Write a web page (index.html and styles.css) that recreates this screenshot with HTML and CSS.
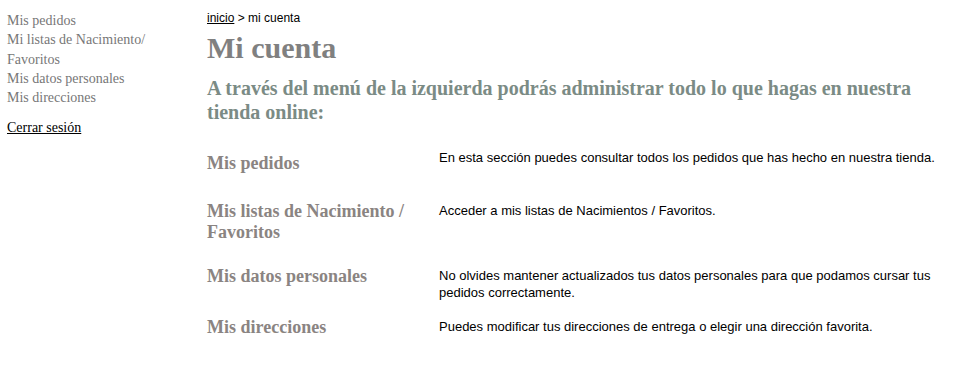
FILE: index.html
```html
<!DOCTYPE html>
<html lang="es">
<head>
<meta charset="utf-8">
<title>Mi cuenta</title>
<link rel="stylesheet" href="styles.css">
</head>
<body>
<div class="page">
  <nav class="side">
    <ul class="side-menu">
      <li><a href="#">Mis pedidos</a></li>
      <li><a href="#">Mi listas de Nacimiento/ Favoritos</a></li>
      <li><a href="#">Mis datos personales</a></li>
      <li><a href="#">Mis direcciones</a></li>
    </ul>
    <a class="logout" href="#">Cerrar sesión</a>
  </nav>
  <main class="main">
    <div class="crumbs"><a href="#">inicio</a> &gt; mi cuenta</div>
    <h1 class="title">Mi cuenta</h1>
    <h2 class="intro">A través del menú de la izquierda podrás administrar todo lo que hagas en nuestra tienda online:</h2>
    <div class="rows">
      <div class="row r1">
        <h3 class="row-title">Mis pedidos</h3>
        <p class="row-desc">En esta sección puedes consultar todos los pedidos que has hecho en nuestra tienda.</p>
      </div>
      <div class="row r2">
        <h3 class="row-title">Mis listas de Nacimiento / Favoritos</h3>
        <p class="row-desc">Acceder a mis listas de Nacimientos / Favoritos.</p>
      </div>
      <div class="row r3">
        <h3 class="row-title">Mis datos personales</h3>
        <p class="row-desc">No olvides mantener actualizados tus datos personales para que podamos cursar tus pedidos correctamente.</p>
      </div>
      <div class="row r4">
        <h3 class="row-title">Mis direcciones</h3>
        <p class="row-desc">Puedes modificar tus direcciones de entrega o elegir una dirección favorita.</p>
      </div>
    </div>
  </main>
</div>
</body>
</html>
```
FILE: styles.css
```css
html, body {
  margin: 0;
  padding: 0;
  background: #fff;
}
body {
  font-family: "Liberation Serif", "Times New Roman", serif;
}
.page {
  display: flex;
  padding: 0 0 0 7px;
}
.side {
  width: 200px;
  flex: none;
  padding-top: 11px;
}
.side-menu {
  list-style: none;
  margin: 0;
  padding: 0;
  width: 160px;
}
.side-menu li {
  font-size: 14px;
  line-height: 19.3px;
}
.side-menu a {
  color: #777;
  text-decoration: none;
}
.logout {
  display: inline-block;
  margin-top: 11px;
  font-size: 14px;
  line-height: 19px;
  color: #000;
  text-decoration: underline;
}
.main {
  flex: 1;
  padding-top: 11px;
  padding-right: 20px;
}
.crumbs {
  font-family: "Liberation Sans", Arial, sans-serif;
  font-size: 12px;
  line-height: 14px;
  color: #000;
}
.crumbs a {
  color: #000;
}
.title {
  margin: 6px 0 0;
  font-size: 30px;
  line-height: 34px;
  font-weight: bold;
  color: #808080;
}
.intro {
  margin: 11px 0 0;
  font-size: 20px;
  line-height: 24px;
  font-weight: bold;
  color: #7b8b85;
  max-width: 720px;
}
.rows {
  margin-top: 25px;
}
.row {
  display: flex;
  align-items: flex-start;
}
.row-title {
  width: 232px;
  flex: none;
  margin: 0;
  font-size: 18px;
  line-height: 21px;
  font-weight: bold;
  color: #8a8482;
}
.row-desc {
  margin: 0;
  font-family: "Liberation Sans", Arial, sans-serif;
  font-size: 13px;
  line-height: 17px;
  color: #000;
  max-width: 500px;
}
.r1 .row-title { padding-top: 4px; }
.r2 { margin-top: 27px; }
.r2 .row-desc,
.r3 .row-desc,
.r4 .row-desc { padding-top: 1px; }
.r3 { margin-top: 23px; }
.r4 { margin-top: 16px; }
```
